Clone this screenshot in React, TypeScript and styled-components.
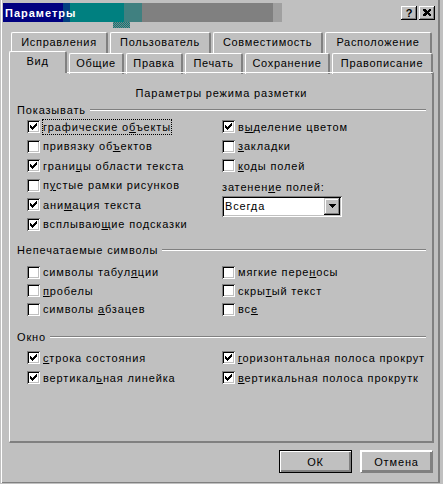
import React from "react";
import styled, { createGlobalStyle } from "styled-components";

const GlobalStyle = createGlobalStyle`
  html, body {
    margin: 0;
    padding: 0;
    background: #c0c0c0;
  }
  body {
    font-family: "Liberation Sans", Arial, sans-serif;
    font-size: 11px;
    letter-spacing: 0.85px;
    color: #000;
  }
  u {
    text-decoration: underline;
    text-underline-offset: 1px;
  }
`;

const Window = styled.div`
  width: 443px;
  height: 484px;
  box-sizing: border-box;
  background: #c0c0c0;
  border-left: 1px solid #c0c0c0;
  border-right: 3px solid #c0c0c0;
  border-bottom: 1px solid #c0c0c0;
  box-shadow: inset 1px 0 0 #fff, inset -2px -1px 0 #808080;
  padding-top: 3px;
  display: flex;
  flex-direction: column;
`;

const TitleBar = styled.div`
  height: 19px;
  margin: 0 3px 0 2px;
  display: flex;
  align-items: center;
  position: relative;
  background: linear-gradient(
    to right,
    #000080 0 60px,
    #004080 60px 67px,
    #008080 67px 121px,
    #408080 121px 139px,
    #808080 139px 270px,
    #a0a0a0 270px 279px,
    transparent 279px
  );
  &::after {
    content: "";
    position: absolute;
    left: 110px;
    top: 19px;
    width: 17px;
    height: 6px;
    background: repeating-conic-gradient(#008080 0 25%, #808080 0 50%) 0 0 / 2px 2px;
  }
`;

const Title = styled.span`
  color: #fff;
  font-weight: bold;
  letter-spacing: 1px;
  padding-left: 2px;
`;

const TitleButtons = styled.div`
  margin-left: auto;
  margin-right: 2px;
  display: flex;
  gap: 2px;
`;

const TitleButton = styled.div`
  width: 16px;
  height: 14px;
  box-sizing: border-box;
  display: grid;
  place-items: center;
  background: #c0c0c0;
  box-shadow: inset -1px -1px 0 #000, inset 1px 1px 0 #fff, inset -2px -2px 0 #808080;
  font-weight: bold;
  font-size: 11px;
  letter-spacing: 0;
  line-height: 14px;
  padding-bottom: 1px;
`;

const Body = styled.div`
  padding: 0 6px 0 8px;
  margin-top: 10px;
  display: flex;
  flex-direction: column;
`;

const TabRow = styled.div<{ $height: number; $indent: number }>`
  display: flex;
  gap: 2px;
  height: ${(p) => p.$height}px;
  padding-left: ${(p) => p.$indent}px;
`;

const Tab = styled.div<{ $width: number; $active?: boolean }>`
  width: ${(p) => p.$width}px;
  height: ${(p) => (p.$active ? 22 : 21)}px;
  margin-top: ${(p) => (p.$active ? -2 : 0)}px;
  box-sizing: border-box;
  background: #c0c0c0;
  border-top: 1px solid #fff;
  border-left: 1px solid #fff;
  border-right: 2px solid #808080;
  border-top-left-radius: 2px;
  border-top-right-radius: 2px;
  text-align: center;
  line-height: ${(p) => (p.$active ? 18 : 19)}px;
  letter-spacing: 0.7px;
  position: relative;
  z-index: ${(p) => (p.$active ? 2 : 0)};
  flex: none;
`;

const Panel = styled.div`
  height: 371px;
  box-sizing: border-box;
  border-top: 1px solid #fff;
  border-left: 1px solid #fff;
  border-right: 2px solid #808080;
  border-bottom: 2px solid #808080;
  padding: 13px 6px 0 7px;
  display: flex;
  flex-direction: column;
  position: relative;
  z-index: 1;
`;

const Caption = styled.div`
  line-height: 14px;
  text-align: center;
`;

const GroupHead = styled.div<{ $top: number }>`
  margin-top: ${(p) => p.$top}px;
  height: 14px;
  display: flex;
  align-items: center;
  gap: 4px;
`;

const GroupLine = styled.div`
  flex: 1;
  height: 0;
  border-top: 1px solid #808080;
  border-bottom: 1px solid #fff;
`;

const Columns = styled.div<{ $top: number }>`
  margin-top: ${(p) => p.$top}px;
  padding-left: 10px;
  display: flex;
`;

const Column = styled.div<{ $width?: number }>`
  width: ${(p) => (p.$width ? `${p.$width}px` : "auto")};
  display: flex;
  flex-direction: column;
`;

const CheckRow = styled.div<{ $height: number }>`
  height: ${(p) => p.$height}px;
  display: flex;
  align-items: center;
  white-space: nowrap;
`;

const Box = styled.span`
  width: 13px;
  height: 13px;
  box-sizing: border-box;
  flex: none;
  background: #fff;
  box-shadow: inset 1px 1px 0 #808080, inset -1px -1px 0 #fff, inset 2px 2px 0 #000,
    inset -2px -2px 0 #c0c0c0;
  display: grid;
  place-items: center;
`;

const CheckLabel = styled.span<{ $focused?: boolean }>`
  margin-left: 2px;
  line-height: 14px;
  border: 1px ${(p) => (p.$focused ? "dotted #000" : "solid transparent")};
`;

const ShadeLabel = styled.div`
  margin-top: 4px;
  line-height: 14px;
`;

const Select = styled.div`
  margin-top: 2px;
  width: 120px;
  height: 21px;
  box-sizing: border-box;
  background: #fff;
  box-shadow: inset 1px 1px 0 #808080, inset -1px -1px 0 #fff, inset 2px 2px 0 #000,
    inset -2px -2px 0 #c0c0c0;
  display: flex;
  align-items: center;
  padding: 2px;
`;

const SelectValue = styled.span`
  flex: 1;
  padding-left: 1px;
`;

const DropButton = styled.div`
  width: 16px;
  height: 17px;
  box-sizing: border-box;
  background: #c0c0c0;
  box-shadow: inset -1px -1px 0 #000, inset 1px 1px 0 #c0c0c0, inset -2px -2px 0 #808080,
    inset 2px 2px 0 #fff;
  display: grid;
  place-items: center;
`;

const Footer = styled.div`
  margin-top: 7px;
  padding-right: 1px;
  display: flex;
  justify-content: flex-end;
  gap: 8px;
`;

const Button = styled.div<{ $default?: boolean }>`
  width: 73px;
  height: 23px;
  box-sizing: border-box;
  display: grid;
  place-items: center;
  background: #c0c0c0;
  border: 1px solid #000;
  box-shadow: inset 1px 1px 0 #fff, inset -1px -1px 0 #808080, inset -2px -2px 0 #808080;
  ${(p) =>
    p.$default
      ? ""
      : "border-color: #fff #808080 #808080 #fff;"}
`;

const Hotkey: React.FC<{ text: string }> = ({ text }) => {
  const i = text.indexOf("&");
  if (i < 0) return <>{text}</>;
  return (
    <>
      {text.slice(0, i)}
      <u>{text[i + 1]}</u>
      {text.slice(i + 2)}
    </>
  );
};

const CheckMark = () => (
  <svg width="7" height="7" viewBox="0 0 7 7" shapeRendering="crispEdges">
    {[2, 3, 4, 3, 2, 1, 0].map((y, x) => (
      <rect key={x} x={x} y={y} width="1" height="3" fill="#000" />
    ))}
  </svg>
);

interface CheckProps {
  label: string;
  checked?: boolean;
  focused?: boolean;
  height: number;
}

const Check: React.FC<CheckProps> = ({ label, checked, focused, height }) => (
  <CheckRow $height={height}>
    <Box>{checked && <CheckMark />}</Box>
    <CheckLabel $focused={focused}>
      <Hotkey text={label} />
    </CheckLabel>
  </CheckRow>
);

const tabsBack = [
  { name: "Исправления", w: 97 },
  { name: "Пользователь", w: 101 },
  { name: "Совместимость", w: 110 },
  { name: "Расположение", w: 107 },
];

const tabsFront = [
  { name: "Вид", w: 58, active: true },
  { name: "Общие", w: 55 },
  { name: "Правка", w: 57 },
  { name: "Печать", w: 58 },
  { name: "Сохранение", w: 85 },
  { name: "Правописание", w: 101 },
];

type Item = { label: string; checked?: boolean; focused?: boolean };

const showLeft: Item[] = [
  { label: "графические о&бъекты", checked: true, focused: true },
  { label: "привязку об&ъектов" },
  { label: "грани&цы области текста", checked: true },
  { label: "п&устые рамки рисунков" },
  { label: "ани&мация текста", checked: true },
  { label: "всплываю&щие подсказки", checked: true },
];

const showRight: Item[] = [
  { label: "в&ыделение цветом", checked: true },
  { label: "&закладки" },
  { label: "&коды полей" },
];

const hiddenLeft: Item[] = [
  { label: "символы табул&яции" },
  { label: "&пробелы" },
  { label: "символы &абзацев" },
];

const hiddenRight: Item[] = [
  { label: "мягкие пере&носы" },
  { label: "скры&тый текст" },
  { label: "вс&е" },
];

const windowLeft: Item[] = [
  { label: "&строка состояния", checked: true },
  { label: "вертикал&ьная линейка", checked: true },
];

const windowRight: Item[] = [
  { label: "&горизонтальная полоса прокрут", checked: true },
  { label: "&вертикальная полоса прокрутк", checked: true },
];

const renderItems = (items: Item[], h: number) =>
  items.map((it) => (
    <Check key={it.label} label={it.label} checked={it.checked} focused={it.focused} height={h} />
  ));

export default function App() {
  return (
    <Window>
      <GlobalStyle />
      <TitleBar>
        <Title>Параметры</Title>
        <TitleButtons>
          <TitleButton>?</TitleButton>
          <TitleButton>
            <svg width="8" height="7" viewBox="0 0 8 7" shapeRendering="crispEdges">
              <path d="M0 0h2l2 2 2-2h2v1L6 3.5 8 6v1H6L4 5 2 7H0V6l2-2.5L0 1z" fill="#000" />
            </svg>
          </TitleButton>
        </TitleButtons>
      </TitleBar>

      <Body>
        <TabRow $height={21} $indent={2}>
          {tabsBack.map((t) => (
            <Tab key={t.name} $width={t.w}>
              {t.name}
            </Tab>
          ))}
        </TabRow>
        <TabRow $height={19} $indent={0}>
          {tabsFront.map((t) => (
            <Tab key={t.name} $width={t.w} $active={t.active}>
              {t.name}
            </Tab>
          ))}
        </TabRow>

        <Panel>
          <Caption>Параметры режима разметки</Caption>

          <GroupHead $top={3}>
            Показывать
            <GroupLine />
          </GroupHead>
          <Columns $top={0}>
            <Column $width={195}>{renderItems(showLeft, 19.5)}</Column>
            <Column>
              {renderItems(showRight, 19.5)}
              <ShadeLabel>
                <Hotkey text="затенен&ие полей:" />
              </ShadeLabel>
              <Select>
                <SelectValue>Всегда</SelectValue>
                <DropButton>
                  <svg width="7" height="4" viewBox="0 0 7 4" shapeRendering="crispEdges">
                    <path d="M0 0h7L3.5 4z" fill="#000" />
                  </svg>
                </DropButton>
              </Select>
            </Column>
          </Columns>

          <GroupHead $top={9}>
            Непечатаемые символы
            <GroupLine />
          </GroupHead>
          <Columns $top={6}>
            <Column $width={195}>{renderItems(hiddenLeft, 18.5)}</Column>
            <Column>{renderItems(hiddenRight, 18.5)}</Column>
          </Columns>

          <GroupHead $top={11}>
            Окно
            <GroupLine />
          </GroupHead>
          <Columns $top={4}>
            <Column $width={195}>{renderItems(windowLeft, 20)}</Column>
            <Column>{renderItems(windowRight, 20)}</Column>
          </Columns>
        </Panel>

        <Footer>
          <Button $default>ОК</Button>
          <Button>Отмена</Button>
        </Footer>
      </Body>
    </Window>
  );
}
